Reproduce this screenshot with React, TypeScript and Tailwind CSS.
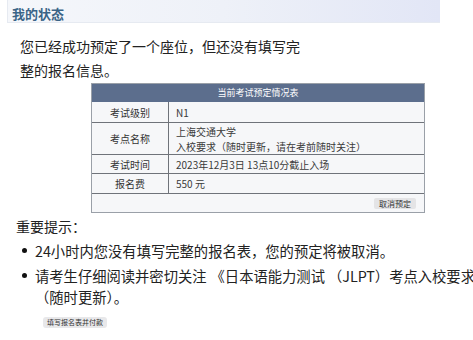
const font = { fontFamily: '"Noto Sans CJK SC", "Noto Sans", sans-serif' };

const rows = [
  { label: "考试级别", value: ["N1"], h: "h-[21px]" },
  { label: "考点名称", value: ["上海交通大学", "入校要求（随时更新，请在考前随时关注）"], h: "h-[32px]" },
  { label: "考试时间", value: ["2023年12月3日 13点10分截止入场"], h: "h-[19px]" },
  { label: "报名费", value: ["550 元"], h: "h-[20px]" },
];

function StatusTable() {
  return (
    <div className="ml-[91px] mt-[1px] w-[334px] border border-[#9aa0a8] bg-[#f6f7f9]">
      <div className="flex h-[18px] items-center justify-center bg-[#5c6e8d] text-[9px] text-white">
        当前考试预定情况表
      </div>
      {rows.map((r) => (
        <div key={r.label} className={`flex ${r.h} border-b border-[#6f737a]`}>
          <div className="flex w-[77px] shrink-0 items-center justify-center border-r border-[#6f737a] text-[10px] text-[#333]">
            {r.label}
          </div>
          <div className="flex flex-col justify-center pl-[7px] text-[10px] leading-[15px] text-[#3a3a3a]">
            {r.value.map((v) => (
              <span key={v}>{v}</span>
            ))}
          </div>
        </div>
      ))}
      <div className="flex h-[18px] items-center justify-end pr-[8px]">
        <button className="h-[11px] rounded-[2px] bg-[#e4e4e6] px-[5px] text-[8px] leading-[11px] text-[#333]">
          取消预定
        </button>
      </div>
    </div>
  );
}

export default function App() {
  return (
    <div className="relative h-[340px] w-[473px] overflow-hidden bg-white text-[#222]" style={font}>
      <div className="ml-[7px] h-[23px] w-[433px] border-b border-l border-[#e6eaf1] bg-gradient-to-r from-[#f5f7fb] via-[#eef1f8] to-[#e2e6f6] pl-[4px]">
        <span className="text-[13px] font-bold leading-[21px] text-[#3a6487]">我的状态</span>
      </div>

      <p className="ml-[20px] mt-[11px] w-[290px] text-[14px] leading-[24px]">
        您已经成功预定了一个座位，但还没有填写完整的报名信息。
      </p>

      <StatusTable />

      <div className="ml-[16px] mt-[1px] text-[14px] leading-[24px]">重要提示：</div>

      <ul className="ml-[22px] text-[14.3px]">
        <li className="flex h-[25px] items-center whitespace-nowrap">
          <span className="mr-[8px] h-[5px] w-[5px] shrink-0 rounded-full bg-[#111]" />
          24小时内您没有填写完整的报名表，您的预定将被取消。
        </li>
        <li className="flex h-[25px] items-center whitespace-nowrap">
          <span className="mr-[8px] h-[5px] w-[5px] shrink-0 rounded-full bg-[#111]" />
          请考生仔细阅读并密切关注
          <span className="ml-[4px]">《日本语能力测试</span>
          <span className="ml-[3px]">（JLPT）考点入校要求</span>
        </li>
        <li className="h-[18px] whitespace-nowrap pl-[13px] leading-[18px]">（随时更新）。</li>
      </ul>

      <button className="ml-[43px] mt-[1px] h-[11px] rounded-[3px] bg-[#e8e8ea] px-[4px] text-[7px] leading-[11px] text-[#333]">
        填写报名表并付款
      </button>
    </div>
  );
}
